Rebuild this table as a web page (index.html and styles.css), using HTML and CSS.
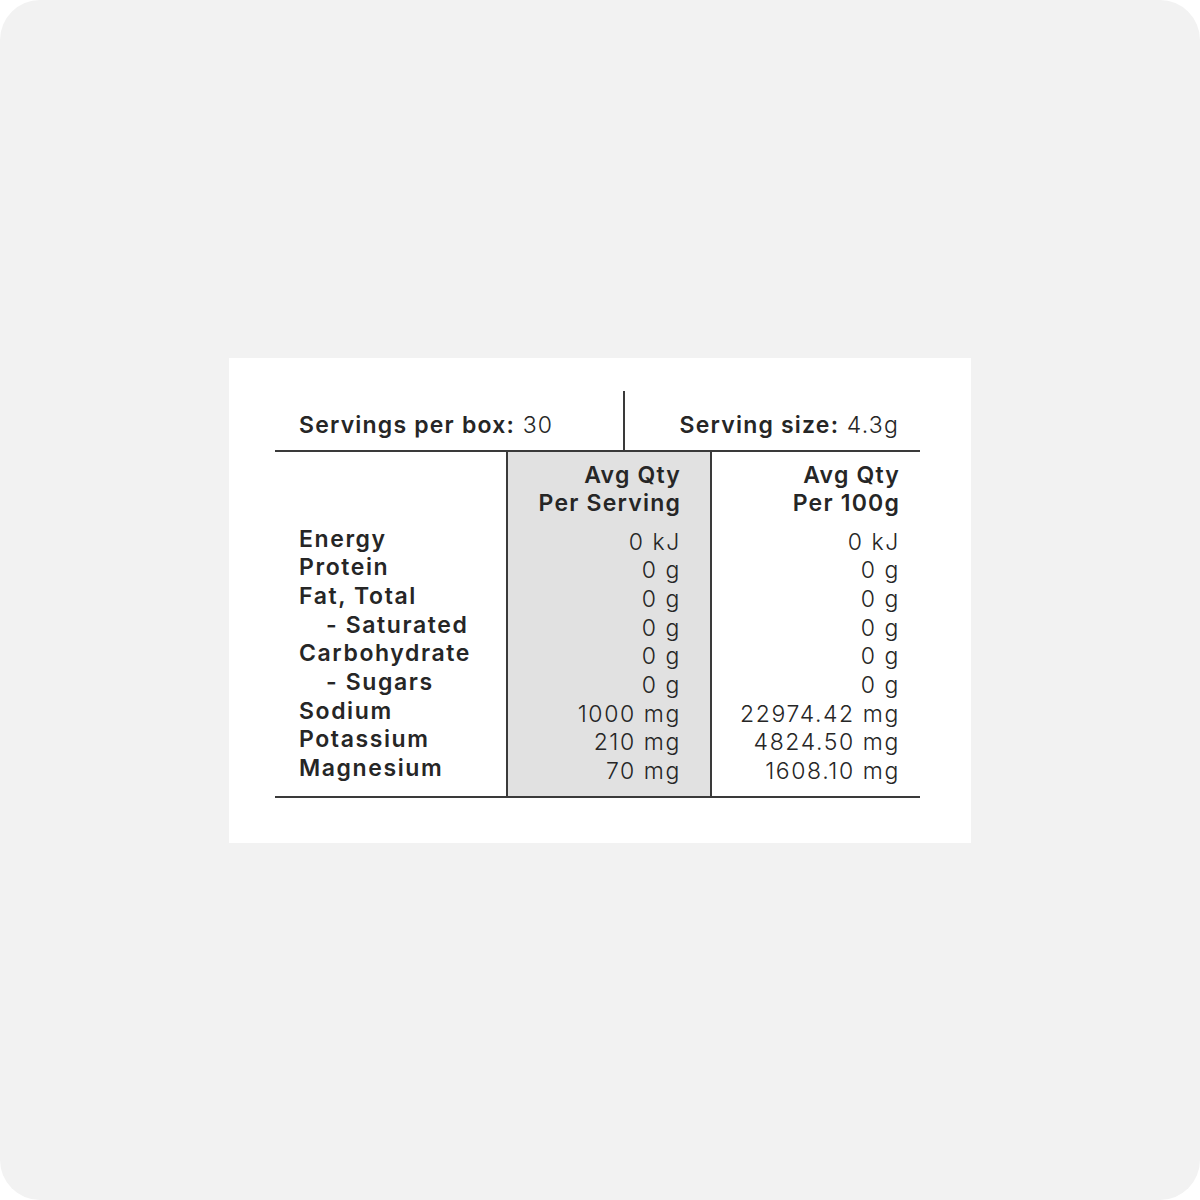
FILE: index.html
```html
<!DOCTYPE html>
<html lang="en">
<head>
<meta charset="utf-8">
<title>Nutrition Information</title>
<link rel="stylesheet" href="styles.css">
</head>
<body>
<div class="frame">
  <div class="card">
    <div class="panel">
      <div class="top">
        <div class="top-cell top-left"><b>Servings per box:</b> 30</div>
        <div class="top-cell top-right"><b>Serving size:</b> 4.3g</div>
      </div>
      <div class="table">
        <div class="col col-label">
          <div class="head"></div>
          <div class="rows">
            <div class="row">Energy</div>
            <div class="row">Protein</div>
            <div class="row">Fat, Total</div>
            <div class="row sub">- Saturated</div>
            <div class="row">Carbohydrate</div>
            <div class="row sub">- Sugars</div>
            <div class="row">Sodium</div>
            <div class="row">Potassium</div>
            <div class="row">Magnesium</div>
          </div>
        </div>
        <div class="col col-serv">
          <div class="head"><div class="head-line">Avg Qty</div><div class="head-line">Per Serving</div></div>
          <div class="rows vals">
            <div class="row">0 kJ</div>
            <div class="row">0 g</div>
            <div class="row">0 g</div>
            <div class="row">0 g</div>
            <div class="row">0 g</div>
            <div class="row">0 g</div>
            <div class="row">1000 mg</div>
            <div class="row">210 mg</div>
            <div class="row">70 mg</div>
          </div>
        </div>
        <div class="col col-100">
          <div class="head"><div class="head-line">Avg Qty</div><div class="head-line">Per 100g</div></div>
          <div class="rows vals">
            <div class="row">0 kJ</div>
            <div class="row">0 g</div>
            <div class="row">0 g</div>
            <div class="row">0 g</div>
            <div class="row">0 g</div>
            <div class="row">0 g</div>
            <div class="row">22974.42 mg</div>
            <div class="row">4824.50 mg</div>
            <div class="row">1608.10 mg</div>
          </div>
        </div>
      </div>
    </div>
  </div>
</div>
</body>
</html>
```

FILE: styles.css
```css
* { box-sizing: border-box; }
html, body { margin: 0; padding: 0; background: #ffffff; }
body {
  font-family: Inter, "Noto Sans", "Liberation Sans", sans-serif;
  color: #262626;
}
.frame {
  width: 1200px;
  height: 1200px;
  background: #f2f2f2;
  border-radius: 40px;
  display: flex;
  align-items: center;
  justify-content: center;
}
.card {
  width: 742px;
  height: 485px;
  background: #ffffff;
  padding: 33px 51px 0 46px;
}
.panel { width: 645px; }
.top {
  display: grid;
  grid-template-columns: 348px 297px;
  height: 61px;
  border-bottom: 2px solid #3a3a3a;
  font-size: 23px;
  font-weight: 300;
  letter-spacing: 1.2px;
}
.top b { font-weight: 600; }
.top-cell { padding-top: 22px; line-height: 25px; }
.top-left { padding-left: 24px; }
.top-right {
  border-left: 2px solid #3a3a3a;
  text-align: right;
  padding-right: 21px;
}
.table {
  display: grid;
  grid-template-columns: 231px 206px 208px;
  border-bottom: 2px solid #3a3a3a;
  font-size: 23px;
  letter-spacing: 1.6px;
}
.col { padding: 9px 0 13px; }
.head {
  height: 56px;
  font-weight: 600;
  text-align: right;
  letter-spacing: 1.2px;
}
.head-line { height: 28px; line-height: 28px; white-space: nowrap; }
.rows { margin-top: 8px; }
.row { height: 28.7px; line-height: 28.7px; white-space: nowrap; }
.col-label { padding-left: 24px; font-weight: 600; }
.sub { padding-left: 27px; }
.vals { font-weight: 300; text-align: right; padding-top: 3px; margin-bottom: -3px; }
.col-serv {
  background: #e1e1e1;
  border-left: 2px solid #3a3a3a;
  border-right: 2px solid #3a3a3a;
  padding-right: 29px;
}
.col-100 { padding-right: 20px; }
```
